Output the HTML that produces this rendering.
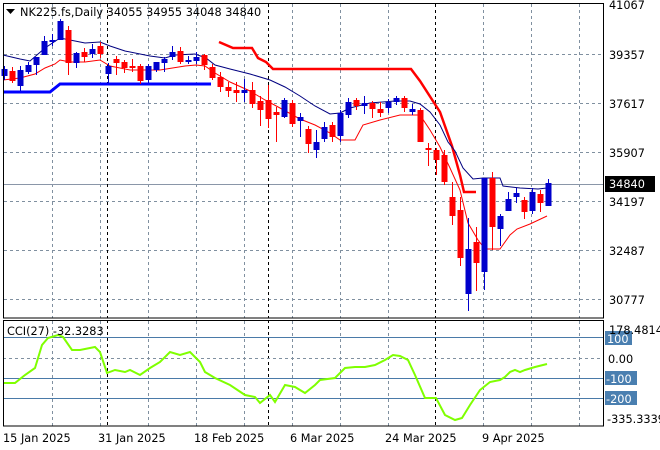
<!DOCTYPE html>
<html><head><meta charset="utf-8"><style>
html,body{margin:0;padding:0;background:#fff;width:660px;height:450px;overflow:hidden}
svg{display:block}
text{font-family:"DejaVu Sans","Liberation Sans",sans-serif;font-size:11.3px;fill:#000}
</style></head><body>
<svg id="s" width="660" height="450" xmlns="http://www.w3.org/2000/svg">
<rect width="660" height="450" fill="#fff"/>
<g id="grid" stroke="#8090a0" stroke-dasharray="3,3" stroke-width="1"></g>
<line x1="3" y1="184.5" x2="603" y2="184.5" stroke="#8a96a8"/>
<g stroke="#000" stroke-dasharray="3,3">
<line x1="107.5" y1="4" x2="107.5" y2="318"/><line x1="268.5" y1="4" x2="268.5" y2="318"/><line x1="435.5" y1="4" x2="435.5" y2="318"/>
<line x1="107.5" y1="320" x2="107.5" y2="426"/><line x1="268.5" y1="320" x2="268.5" y2="426"/><line x1="435.5" y1="320" x2="435.5" y2="426"/>
</g>
<g stroke="#4a7aa8" stroke-width="1">
<line x1="3" y1="337.5" x2="603" y2="337.5"/><line x1="3" y1="378.5" x2="603" y2="378.5"/><line x1="3" y1="398.5" x2="603" y2="398.5"/>
</g>
<line x1="3" y1="358.5" x2="603" y2="358.5" stroke="#8090a0" stroke-dasharray="3,3"/>
<polyline fill="none" stroke="#0000ff" stroke-width="3" points="3,92 50,92 60,84 211,84"/>
<polyline fill="none" stroke="#ff0000" stroke-width="2.5" points="219,42 233,48 252,48 258,58 266,62 273,69 411,69 420,81 440,112 452,146 460,175 464,192 476,192"/>
<polyline fill="none" stroke="#000080" stroke-width="1" points="3,55 20,59 30,61 45,48 60,38 70,40 85,43 100,42 110,46 125,51 150,56 165,58 175,55 195,54 206,58 215,65 230,69 250,74 270,80 285,87 300,96 315,106 330,114 340,113 350,108 370,103 395,101 410,101 420,104 430,112 440,125 448,142 455,151 463,168 473,179 483,178 500,178 503,186 520,188 538,189 547,188"/>
<polyline fill="none" stroke="#ff0000" stroke-width="1" points="3,80 20,78 35,74 45,68 55,64 60,60 70,62 85,62 100,60 110,66 130,70 160,70 185,66 196,65 205,66 215,73 230,82 250,91 265,100 280,108 300,119 315,125 330,133 340,140 355,140 363,125 380,120 400,115 420,115 430,130 440,147 450,168 460,190 468,223 478,240 485,249 500,249 510,235 517,229 530,224 547,216"/>
<g id="candles"></g>
<polyline fill="none" stroke="#7fff00" stroke-width="2" points="3,383 15,383 25,375 35,368 42,345 48,338 58,335 63,337 72,350 80,350 95,347 100,352 107,373 115,370 125,372 130,370 140,375 150,368 160,362 170,352 180,355 190,352 200,362 205,372 215,378 230,385 245,395 255,397 260,403 270,395 275,402 285,385 295,387 305,393 315,385 320,380 335,378 345,368 355,367 365,367 375,365 385,360 393,355 400,356 408,360 415,375 425,398 436,398 445,415 455,420 462,418 470,405 480,390 490,382 500,380 505,377 510,372 515,370 520,372 525,370 535,367 547,364"/>
<rect x="3.5" y="3.5" width="600" height="314.5" fill="none" stroke="#000"/>
<rect x="3.5" y="320.5" width="600" height="105.5" fill="none" stroke="#000"/>
<polygon points="6,9 15,9 10.5,14" fill="#000"/>
<text x="20" y="16">NK225.fs,Daily  34055 34955 34048 34840</text>
<text x="7" y="335">CCI(27) -32.3283</text>
<g id="ax"></g>
<rect x="605" y="176" width="50" height="16" fill="#000"/>
<text x="609" y="188" style="fill:#fff">34840</text>
<rect x="605" y="331" width="27" height="14" fill="#4a7fb0"/>
<rect x="605" y="371" width="32" height="14" fill="#4a7fb0"/>
<rect x="605" y="391" width="32" height="14" fill="#4a7fb0"/>
<text x="609" y="334">178.4814</text>
<text x="607" y="343" style="fill:#fff">100</text>
<text x="608" y="363">0.00</text>
<text x="606" y="383" style="fill:#fff">-100</text>
<text x="606" y="403" style="fill:#fff">-200</text>
<text x="607" y="423">-335.3339</text>
<text x="3" y="442">15 Jan 2025</text>
<text x="98" y="442">31 Jan 2025</text>
<text x="194" y="442">18 Feb 2025</text>
<text x="290" y="442">6 Mar 2025</text>
<text x="385" y="442">24 Mar 2025</text>
<text x="482" y="442">9 Apr 2025</text>
</svg>
<script>
var NS="http://www.w3.org/2000/svg";
function el(p,t,a){var e=document.createElementNS(NS,t);for(var k in a)e.setAttribute(k,a[k]);p.appendChild(e);return e;}
var g=document.getElementById("grid");
[52,100,148,196,244,292,340,388,483,531,579].forEach(function(x){
 el(g,"line",{x1:x+.5,y1:4,x2:x+.5,y2:318});el(g,"line",{x1:x+.5,y1:321,x2:x+.5,y2:426});});
[54,103,152,201,250,299].forEach(function(y){el(g,"line",{x1:4,y1:y+.5,x2:603,y2:y+.5});});
var ax=document.getElementById("ax");
[[4,"41067"],[54,"39357"],[103,"37617"],[152,"35907"],[201,"34197"],[250,"32487"],[299,"30777"]].forEach(function(a){
 var t=el(ax,"text",{x:609,y:a[0]+5});t.textContent=a[1];});
var C=[["b",69,76,66,80],["r",71,81,67,83],["b",70,86,66,91],["b",65,72,62,74],["b",57,65,57,75],["b",41,55,36,55],["b",40,42,34,46],["b",21,40,19,40],["r",30,63,26,75],["b",53,63,52,68],["r",52,57,48,62],["b",49,54,44,58],["r",46,54,42,58],["b",66,74,63,83],["r",59,63,56,75],["r",62,68,60,73],["r",66,67,59,72],["r",66,81,64,84],["b",66,80,64,83],["b",62,70,62,72],["b",59,63,57,72],["b",52,57,46,60],["r",51,62,47,64],["b",60,61,56,64],["b",57,61,52,64],["r",55,65,54,70],["r",67,78,64,80],["r",77,87,72,92],["r",87,91,82,97],["r",90,93,82,102],["b",90,93,79,102],["r",90,104,82,108],["r",101,110,96,126],["r",100,119,85,128],["r",112,115,107,142],["b",100,117,98,118],["r",103,124,100,127],["b",117,121,113,137],["r",129,144,126,153],["b",142,150,130,158],["b",127,139,122,142],["r",125,137,122,142],["b",113,136,110,142],["b",102,115,98,118],["r",100,106,98,110],["b",103,106,96,114],["r",103,109,101,118],["r",109,113,102,117],["b",102,108,99,113],["b",98,102,96,105],["r",98,108,96,112],["b",109,112,104,115],["r",110,142,108,142],["r",148,150,143,166],["r",150,160,148,175],["r",155,182,150,185],["r",197,216,182,225],["r",210,258,197,266],["b",249,294,218,311],["r",242,263,227,291],["b",178,272,178,290],["r",178,227,172,250],["b",216,229,214,246],["b",199,211,192,211],["b",193,197,188,203],["r",200,212,197,219],["b",192,211,188,214],["r",194,203,190,212],["b",183,206,179,206]];
var cg=document.getElementById("candles");
C.forEach(function(c,i){var x=4+8*i;var col=c[0]=="b"?"#0000cc":"#ff0000";
 el(cg,"line",{x1:x+.5,y1:c[3],x2:x+.5,y2:c[4],stroke:col,"stroke-width":1});
 el(cg,"rect",{x:x-2.5,y:c[1],width:6,height:Math.max(2,c[2]-c[1]),fill:col});});
</script>
</body></html>
